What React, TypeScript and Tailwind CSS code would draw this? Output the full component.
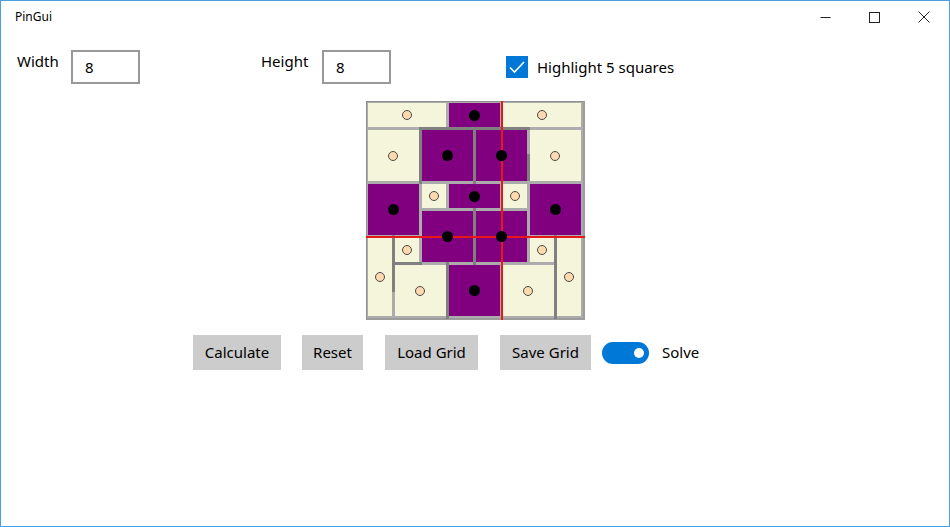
import React from "react";

type Piece = { cls: string; dark: boolean };

// 8x8 board, each piece is a rectangle with a pin in the middle
const pieces: Piece[] = [
  { cls: "col-start-1 col-span-3 row-start-1 row-span-1", dark: false },
  { cls: "col-start-4 col-span-2 row-start-1 row-span-1", dark: true },
  { cls: "col-start-6 col-span-3 row-start-1 row-span-1", dark: false },
  { cls: "col-start-1 col-span-2 row-start-2 row-span-2", dark: false },
  { cls: "col-start-3 col-span-2 row-start-2 row-span-2", dark: true },
  { cls: "col-start-5 col-span-2 row-start-2 row-span-2", dark: true },
  { cls: "col-start-7 col-span-2 row-start-2 row-span-2", dark: false },
  { cls: "col-start-1 col-span-2 row-start-4 row-span-2", dark: true },
  { cls: "col-start-3 col-span-1 row-start-4 row-span-1", dark: false },
  { cls: "col-start-4 col-span-2 row-start-4 row-span-1", dark: true },
  { cls: "col-start-6 col-span-1 row-start-4 row-span-1", dark: false },
  { cls: "col-start-7 col-span-2 row-start-4 row-span-2", dark: true },
  { cls: "col-start-3 col-span-2 row-start-5 row-span-2", dark: true },
  { cls: "col-start-5 col-span-2 row-start-5 row-span-2", dark: true },
  { cls: "col-start-1 col-span-1 row-start-6 row-span-3", dark: false },
  { cls: "col-start-2 col-span-1 row-start-6 row-span-1", dark: false },
  { cls: "col-start-7 col-span-1 row-start-6 row-span-1", dark: false },
  { cls: "col-start-8 col-span-1 row-start-6 row-span-3", dark: false },
  { cls: "col-start-2 col-span-2 row-start-7 row-span-2", dark: false },
  { cls: "col-start-4 col-span-2 row-start-7 row-span-2", dark: true },
  { cls: "col-start-6 col-span-2 row-start-7 row-span-2", dark: false },
];

// darker wall segments, in cell units: [x1, y1, x2, y2]
const walls: [number, number, number, number][] = [
  [2, 1, 2, 3],
  [4, 1, 4, 3],
  [4, 4, 4, 6],
  [6, 2, 6, 2.9],
  [1, 5, 1, 7],
  [3, 6, 3, 8],
  [7, 5, 7, 8],
  [2, 1, 6, 1],
  [1, 6, 2, 6],
];

const CELL = 27;

function Board() {
  return (
    <div className="relative mx-auto w-fit border-l border-t border-r-2 border-b-2 border-l-[#8e8e8e] border-t-[#8e8e8e] border-r-[#9c9c9c] border-b-[#9c9c9c] bg-[#acacac]">
      <div className="grid grid-cols-[repeat(8,27px)] grid-rows-[repeat(8,27px)]">
        {pieces.map((p, i) => (
          <div
            key={i}
            className={`${p.cls} ml-[1px] mt-[1px] mr-[2px] mb-[2px] flex items-center justify-center ${
              p.dark ? "bg-[#800080]" : "bg-[#f5f5dc]"
            }`}
          >
            {p.dark ? (
              <span className="relative z-20 h-[11px] w-[11px] rounded-full bg-black" />
            ) : (
              <span className="relative z-20 h-[10px] w-[10px] rounded-full border border-[#4a4a4a] bg-[#fcd9ae]" />
            )}
          </div>
        ))}
      </div>
      {walls.map(([x1, y1, x2, y2], i) => {
        const vertical = x1 === x2;
        return (
          <div
            key={i}
            className="absolute bg-[#808080]"
            style={
              vertical
                ? { left: x1 * CELL - 2, top: y1 * CELL - 2, width: 3, height: (y2 - y1) * CELL + 3 }
                : { left: x1 * CELL - 2, top: y1 * CELL - 2, height: 3, width: (x2 - x1) * CELL + 3 }
            }
          />
        );
      })}
      {/* red centre lines */}
      <div className="absolute left-[134px] top-[-1px] z-10 h-[219px] w-[2px] bg-[#e81818]" />
      <div className="absolute left-[-1px] top-[134px] z-10 h-[2px] w-[219px] bg-[#e81818]" />
    </div>
  );
}

export default function App() {
  return (
    <div className="h-[527px] w-[950px] overflow-hidden border border-[#4a9fe0] bg-white font-['Noto_Sans','Open_Sans',sans-serif] text-black">
      <div className="flex h-[32px] items-center">
        <span className="pl-[14px] text-[12px]">PinGui</span>
        <div className="ml-auto flex items-center gap-[38px] pr-[19px] text-[#222]">
          <svg width="11" height="11" viewBox="0 0 11 11">
            <path d="M0.5 5.5h10" stroke="currentColor" strokeWidth="1" />
          </svg>
          <svg width="11" height="11" viewBox="0 0 11 11">
            <rect x="0.5" y="0.5" width="10" height="10" fill="none" stroke="currentColor" strokeWidth="1" />
          </svg>
          <svg width="12" height="12" viewBox="0 0 12 12">
            <path d="M0.5 0.5l11 11M11.5 0.5l-11 11" stroke="currentColor" strokeWidth="1" />
          </svg>
        </div>
      </div>

      <div className="mt-[17px] flex h-[34px] items-start pl-[16px] text-[15px]">
        <span className="mt-[1px] w-[54px] leading-[20px]">Width</span>
        <div className="flex h-[34px] w-[69px] items-center border-2 border-[#999999] pl-[12px]">8</div>
        <span className="ml-[121px] mt-[1px] w-[61px] leading-[20px]">Height</span>
        <div className="flex h-[34px] w-[69px] items-center border-2 border-[#999999] pl-[12px]">8</div>
        <div className="ml-[115px] flex h-[34px] items-center">
          <span className="flex h-[22px] w-[22px] items-center justify-center bg-[#0078d7]">
            <svg width="22" height="22" viewBox="0 0 22 22">
              <path d="M4 11.5l4.5 4.5 9.5-10" fill="none" stroke="white" strokeWidth="1.6" />
            </svg>
          </span>
          <span className="ml-[9px]">Highlight 5 squares</span>
        </div>
      </div>

      <div className="mt-[17px]">
        <Board />
      </div>

      <div className="mt-[15px] flex items-center pl-[192px] text-[15px]">
        <button className="h-[35px] w-[88px] bg-[#cccccc]">Calculate</button>
        <button className="ml-[21px] h-[35px] w-[61px] bg-[#cccccc]">Reset</button>
        <button className="ml-[22px] h-[35px] w-[93px] bg-[#cccccc]">Load Grid</button>
        <button className="ml-[22px] h-[35px] w-[91px] bg-[#cccccc]">Save Grid</button>
        <div className="ml-[11px] flex h-[22px] w-[47px] items-center justify-end rounded-full bg-[#0078d7] pr-[5px]">
          <span className="h-[10px] w-[10px] rounded-full bg-white" />
        </div>
        <span className="ml-[13px]">Solve</span>
      </div>
    </div>
  );
}
